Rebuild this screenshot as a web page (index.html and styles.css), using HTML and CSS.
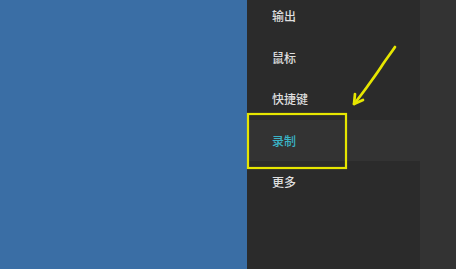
FILE: index.html
```html
<!DOCTYPE html>
<html>
<head>
<meta charset="utf-8">
<link rel="stylesheet" href="styles.css">
</head>
<body>
<div class="screen">
  <div class="desktop"></div>
  <div class="panel">
    <div class="menu">
      <div class="item">输出</div>
      <div class="item">鼠标</div>
      <div class="item">快捷键</div>
      <div class="item selected">录制</div>
      <div class="item">更多</div>
      <div class="fill"></div>
    </div>
  </div>
  <svg class="annot" width="456" height="269" viewBox="0 0 456 269">
    <rect x="248" y="114" width="98" height="54" fill="none" stroke="#e6e600" stroke-width="2.2"/>
    <path d="M395 47 C391 53 387 58 383 64 C378 72 372 80 367 87 C362 94 358 99 354 104" fill="none" stroke="#e6e600" stroke-width="2.7" stroke-linecap="round"/>
    <path d="M355 94 L354 104 L363 100" fill="none" stroke="#e6e600" stroke-width="2.7" stroke-linecap="round" stroke-linejoin="round"/>
  </svg>
</div>
</body>
</html>
```
FILE: styles.css
```css
html, body {
  margin: 0;
  padding: 0;
  overflow: hidden;
}
body {
  font-family: "Noto Sans CJK SC", "Noto Sans", sans-serif;
}
.screen {
  position: relative;
  display: flex;
  width: 456px;
  height: 269px;
  overflow: hidden;
}
.desktop {
  width: 247px;
  flex: none;
  background: #3a6ea5;
}
.panel {
  flex: 1;
  background: #333333;
  overflow: hidden;
}
.menu {
  display: flex;
  flex-direction: column;
  height: calc(100% + 5px);
  margin-top: -5px;
}
.item {
  height: 41.5px;
  line-height: 41.5px;
  padding-left: 25px;
  margin-right: 36px;
  background: #2b2b2b;
  color: #dedede;
  font-size: 12px;
  font-weight: 500;
  flex: none;
}
.item.selected {
  margin-right: 0;
  background: #333333;
  color: #3ab4c6;
}
.fill {
  flex: 1;
  margin-right: 36px;
  background: #2b2b2b;
}
.annot {
  position: absolute;
  left: 0;
  top: 0;
  pointer-events: none;
}
```
